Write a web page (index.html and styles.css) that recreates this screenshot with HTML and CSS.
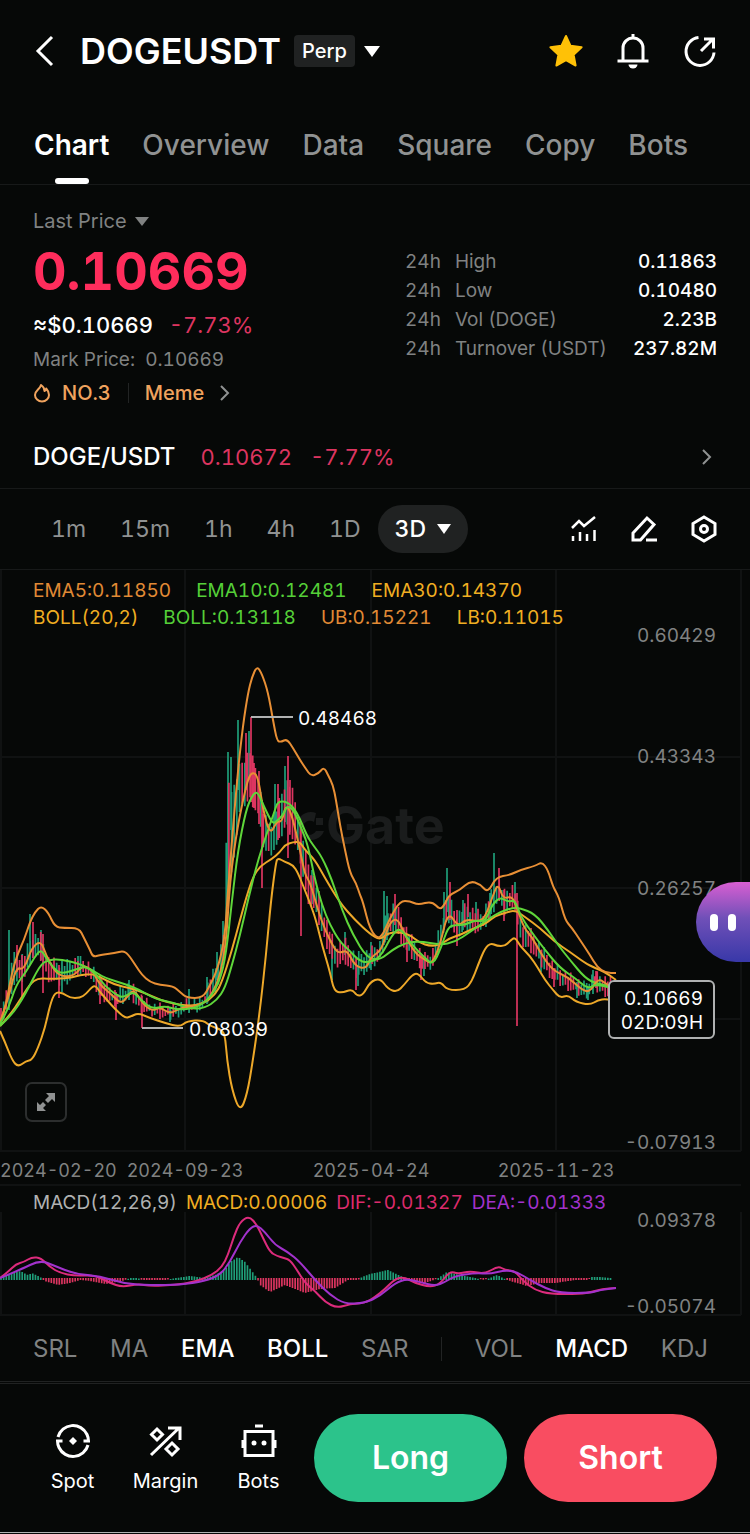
FILE: index.html
```html
<!DOCTYPE html>
<html lang="en">
<head>
    <meta charset="UTF-8">
    <meta name="viewport" content="width=device-width, initial-scale=1.0">
    <title>DOGEUSDT Perp</title>
    <link rel="stylesheet" href="styles.css">
</head>
<body>
    <header class="header">
        <button class="icon-btn back" aria-label="Back">
            <svg width="22" height="32" viewBox="0 0 22 32"><path d="M18 2 4 16l14 14" fill="none" stroke="currentColor" stroke-width="3"/></svg>
        </button>
        <h1 class="symbol">DOGEUSDT</h1>
        <button class="contract">
            <span class="badge">Perp</span>
            <svg width="16" height="11" viewBox="0 0 16 11"><path d="M0 0h16L8 11z" fill="currentColor"/></svg>
        </button>
        <div class="header-actions">
            <button class="icon-btn star" aria-label="Favourite">
                <svg width="36" height="36" viewBox="0 0 36 36"><path d="M18 3l4.600 9.800 11 1.500-8 7.500 2 10.700L18 27.200l-9.600 5.300 2-10.700-8-7.500 11-1.500z" fill="currentColor" stroke="currentColor" stroke-width="2" stroke-linejoin="round"/></svg>
            </button>
            <button class="icon-btn" aria-label="Alerts">
                <svg width="36" height="36" viewBox="0 0 36 36" fill="none" stroke="currentColor" stroke-width="3"><path d="M18 1v4M8 27V15a10 10 0 0 1 20 0v12M2.500 28h31"/><path d="M13.500 31.500h9a4.500 4 0 0 1-9 0z" fill="currentColor" stroke="none"/></svg>
            </button>
            <button class="icon-btn" aria-label="Share">
                <svg width="36" height="36" viewBox="0 0 36 36" fill="none" stroke="currentColor" stroke-width="3"><path d="M16.500 4.500A14 14 0 1 0 32 19.500M19 18 30.500 6.500M22 6h9.500v9.500"/></svg>
            </button>
        </div>
    </header>

    <nav class="tabs">
        <a class="tab active" href="#chart">Chart</a>
        <a class="tab" href="#overview">Overview</a>
        <a class="tab" href="#data">Data</a>
        <a class="tab" href="#square">Square</a>
        <a class="tab" href="#copy">Copy</a>
        <a class="tab" href="#bots">Bots</a>
    </nav>

    <section class="summary">
        <div class="price-row">
            <div class="price-info">
                <button class="price-type">Last Price
                    <svg width="14" height="9" viewBox="0 0 14 9"><path d="M0 0h14L7 9z" fill="currentColor"/></svg>
                </button>
                <div class="price">0.10669</div>
                <div class="fiat">≈$0.10669 <span class="change">-7.73%</span></div>
                <div class="mark">Mark Price: <span>0.10669</span></div>
                <a class="tags" href="#meme">
                    <svg width="18" height="20" viewBox="0 0 18 20"><path d="M8 2c3 2 3.500 4 3.500 6 1-.5 1.500-1.500 1.700-2.500C15 7.500 16 9.500 16 12a7 6.500 0 0 1-14 0c0-2.500 1.500-4 3-5.500C6.500 5 7.500 4 8 2z" fill="none" stroke="currentColor" stroke-width="2" stroke-linejoin="round"/></svg>
                    <span class="rank">NO.3</span>
                    <span class="category">Meme</span>
                    <svg class="arrow" width="10" height="16" viewBox="0 0 10 16"><path d="M1 1l7 7-7 7" fill="none" stroke="currentColor" stroke-width="2"/></svg>
                </a>
            </div>
            <table class="stats">
                <tr><th scope="row"><span>24h</span>High</th><td>0.11863</td></tr>
                <tr><th scope="row"><span>24h</span>Low</th><td>0.10480</td></tr>
                <tr><th scope="row"><span>24h</span>Vol (DOGE)</th><td>2.23B</td></tr>
                <tr><th scope="row"><span>24h</span>Turnover (USDT)</th><td>237.82M</td></tr>
            </table>
        </div>
        <a class="spot-pair" href="#spot">
            <span class="pair">DOGE/USDT</span>
            <span>0.10672</span>
            <span>-7.77%</span>
            <svg class="arrow" width="10" height="16" viewBox="0 0 10 16"><path d="M1 1l7 7-7 7" fill="none" stroke="currentColor" stroke-width="2"/></svg>
        </a>
    </section>

    <div class="toolbar">
        <button class="interval">1m</button>
        <button class="interval">15m</button>
        <button class="interval">1h</button>
        <button class="interval">4h</button>
        <button class="interval">1D</button>
        <button class="interval selected">3D
            <svg width="14" height="10" viewBox="0 0 14 10"><path d="M0 0h14L7 10z" fill="currentColor"/></svg>
        </button>
        <div class="tools">
            <button class="icon-btn" aria-label="Indicators">
                <svg width="28" height="28" viewBox="0 0 28 28" fill="none" stroke="currentColor" stroke-width="2.500"><path d="M2 13l7-7 5 5L25 2M3 21v5M10 17v9M17 19v7M24.500 15v11"/></svg>
            </button>
            <button class="icon-btn" aria-label="Draw">
                <svg width="28" height="28" viewBox="0 0 28 28" fill="none" stroke="currentColor" stroke-width="3"><path d="M3 25v-7L17 3l7 6.500L10.500 25zM16 25h11"/></svg>
            </button>
            <button class="icon-btn" aria-label="Settings">
                <svg width="28" height="28" viewBox="0 0 28 28" fill="none" stroke="currentColor" stroke-width="3"><path d="M14 2l11 6.500v11L14 26 3 19.500v-11z"/><circle cx="14" cy="14" r="3.500"/></svg>
            </button>
        </div>
    </div>

    <section class="chart">
        <svg id="price-chart" class="plot" viewBox="0 570 750 616">
            <path class="grid" d="M0 757h741M0 888h741M0 1019h741M0 1151h741M0 1185h741M1 570v581M185 570v581M371 570v581M556 570v581M741 570v581"/>
            <g class="watermark">
                <path d="M316 813a14 14 0 1 0 8 18h-8a7 7 0 1 1-2-9zM316 818h7v7h-7z"/>
                <text x="326" y="844">Gate</text>
            </g>
            <g id="candles"></g>
            <g id="overlays"></g>
            <path class="pointer" d="M251 717h42M142 1028h41"/>
            <g class="marker">
                <text x="298" y="725">0.48468</text>
                <text x="189" y="1036">0.08039</text>
            </g>
            <g class="axis">
                <text x="716" y="642" class="end">0.60429</text>
                <text x="716" y="763" class="end">0.43343</text>
                <text x="716" y="895" class="end">0.26257</text>
                <text x="716" y="1149" class="end">-0.07913</text>
            </g>
            <g class="axis dates">
                <text x="0" y="1177">2024-02-20</text>
                <text x="185" y="1177" class="middle">2024-09-23</text>
                <text x="371" y="1177" class="middle">2025-04-24</text>
                <text x="556" y="1177" class="middle">2025-11-23</text>
            </g>
            <rect class="tag" x="609" y="981" width="105" height="57" rx="5"/>
            <g class="marker">
                <text x="703" y="1005" class="end">0.10669</text>
                <text x="703" y="1029" class="end">02D:09H</text>
            </g>
        </svg>
        <div class="legend">
            <div><span class="orange">EMA5:0.11850</span><span class="green">EMA10:0.12481</span><span class="yellow">EMA30:0.14370</span></div>
            <div><span class="yellow">BOLL(20,2)</span><span class="green">BOLL:0.13118</span><span class="orange">UB:0.15221</span><span class="yellow">LB:0.11015</span></div>
        </div>
        <button class="expand" aria-label="Full screen">
            <svg width="20" height="20" viewBox="0 0 20 20" fill="currentColor"><path d="M10 1h9v9l-3-3-4 4-3-3 4-4zM1 10l3 3 3-3 3 3-3 3 3 3H1z"/></svg>
        </button>
        <button class="assistant" aria-label="Assistant"><span></span><span></span></button>
    </section>

    <section class="macd">
        <svg id="macd-chart" class="plot" viewBox="0 1186 750 130">
            <path class="grid" d="M1 1212v103M185 1212v103M371 1212v103M556 1212v103M741 1212v103M0 1315h741"/>
            <g id="histogram"></g>
            <g id="macd-lines"></g>
            <g class="axis">
                <text x="716" y="1227" class="end">0.09378</text>
                <text x="716" y="1313" class="end">-0.05074</text>
            </g>
        </svg>
        <div class="macd-legend">
            <span>MACD(12,26,9)</span><span class="yellow">MACD:0.00006</span><span class="pink">DIF:-0.01327</span><span class="purple">DEA:-0.01333</span>
        </div>
    </section>

    <div class="indicators">
        <button>SRL</button>
        <button>MA</button>
        <button class="on">EMA</button>
        <button class="on">BOLL</button>
        <button>SAR</button>
        <i class="divider"></i>
        <button>VOL</button>
        <button class="on">MACD</button>
        <button>KDJ</button>
    </div>

    <footer class="trade-bar">
        <a class="shortcut" href="#spot">
            <svg width="36" height="36" viewBox="0 0 36 36" fill="none" stroke="currentColor" stroke-width="3"><path d="M3 14a15.500 15.500 0 0 1 29-2.500A15.500 15.500 0 0 1 33.500 18h-5M33 22a15.500 15.500 0 0 1-29 2.500A15.500 15.500 0 0 1 2.500 18h5"/><path d="M18 14l4 4-4 4-4-4z" fill="currentColor" stroke="none"/></svg>
            Spot
        </a>
        <a class="shortcut" href="#margin">
            <svg width="36" height="36" viewBox="0 0 36 36" fill="none" stroke="currentColor" stroke-width="3"><path d="M3 32 31 5M20 5h12v12M9 6l5.500 5.500L9 17l-5.500-5.500zM24 20l6 6-6 6-6-6z"/></svg>
            Margin
        </a>
        <a class="shortcut" href="#bots">
            <svg width="36" height="36" viewBox="0 0 36 36" fill="none" stroke="currentColor" stroke-width="3"><path d="M4 8.500h28v24H4zM14 3h8M2 17v8M34 17v8"/><circle cx="13" cy="20" r="2.500" fill="currentColor" stroke="none"/><circle cx="23" cy="20" r="2.500" fill="currentColor" stroke="none"/></svg>
            Bots
        </a>
        <button class="trade long">Long</button>
        <button class="trade short">Short</button>
    </footer>

    <script src="chart.js"></script>
</body>
</html>
```
FILE: styles.css
```css
body {
    margin: 0;
    background-color: #060807;
    color: #fff;
    font-family: Inter, "Liberation Sans", sans-serif;
    font-size: 20px;
    line-height: 24px;
    font-variant-numeric: tabular-nums;
}
button {
    margin: 0;
    padding: 0;
    border: 0;
    background: none;
    color: inherit;
    font: inherit;
    font-variant-numeric: inherit;
    cursor: pointer;
}
a {
    color: inherit;
    text-decoration: none;
}
svg {
    display: block;
    flex-shrink: 0;
}

/* header */
.header {
    display: flex;
    align-items: center;
    height: 102px;
    padding: 0 32px 0 34px;
}
.symbol {
    margin: 0 13px 0 24px;
    font-size: 36px;
    font-weight: 600;
    line-height: 40px;
}
.contract {
    display: flex;
    align-items: center;
    gap: 9px;
}
.badge {
    padding: 4px 8px;
    border-radius: 4px;
    background-color: #202222;
    font-weight: 500;
}
.header-actions {
    display: flex;
    gap: 31px;
    margin-left: auto;
}
.star {
    color: #ffc107;
}

/* tabs */
.tabs {
    display: flex;
    gap: 33px;
    height: 82px;
    padding: 0 34px;
    border-bottom: 1px solid #171919;
}
.tab {
    position: relative;
    color: #909292;
    font-size: 28px;
    font-weight: 500;
    line-height: 86px;
}
.tab.active {
    color: #fff;
    font-weight: 600;
}
.tab.active::after {
    content: "";
    position: absolute;
    left: 50%;
    bottom: 0;
    width: 34px;
    height: 6px;
    margin-left: -17px;
    border-radius: 3px;
    background-color: #fff;
}

/* price summary */
.summary {
    padding: 24px 33px 0;
    border-bottom: 1px solid #171919;
}
.price-row {
    display: flex;
    justify-content: space-between;
}
.price-type {
    display: flex;
    align-items: center;
    gap: 8px;
    color: #808282;
}
.price {
    color: #ff2d5c;
    font-size: 52px;
    font-weight: 700;
    line-height: 78px;
}
.fiat {
    font-size: 22px;
    font-weight: 500;
    line-height: 28px;
}
.change {
    margin-left: 10px;
    color: #dc3560;
    font-weight: 400;
}
.mark {
    color: #808282;
    font-size: 19px;
    line-height: 42px;
}
.mark span {
    margin-left: 5px;
}
.tags {
    display: flex;
    align-items: center;
    color: #f0a35e;
    font-weight: 500;
}
.rank {
    margin-left: 11px;
    padding-right: 17px;
    border-right: 1px solid #222424;
    line-height: 20px;
}
.category {
    margin: 0 16px;
}
.arrow {
    color: #909292;
}
.stats {
    width: 312px;
    margin-top: 38px;
    border-collapse: collapse;
    align-self: flex-start;
}
.stats th, .stats td {
    padding: 0;
    font-size: 19px;
    line-height: 29px;
    white-space: nowrap;
}
.stats th {
    color: #808282;
    font-weight: 400;
    text-align: left;
}
.stats th span {
    margin-right: 14px;
}
.stats td {
    font-weight: 500;
    text-align: right;
}
.spot-pair {
    display: flex;
    align-items: center;
    gap: 18px;
    height: 62px;
    margin-top: 21px;
    color: #dc3560;
    font-size: 22px;
}
.spot-pair .pair {
    margin-right: 7px;
    color: #fff;
    font-size: 24px;
    font-weight: 500;
}
.spot-pair .arrow {
    margin-left: auto;
    margin-right: 5px;
}

/* interval toolbar */
.toolbar {
    display: flex;
    align-items: center;
    height: 80px;
    padding: 0 32px 0 34px;
    border-bottom: 1px solid #171919;
}
.interval {
    padding: 0 17px;
    color: #909292;
    font-size: 23px;
}
.interval.selected {
    display: flex;
    align-items: center;
    gap: 11px;
    height: 48px;
    border-radius: 24px;
    background-color: #202222;
    color: #fff;
    font-weight: 500;
}
.tools {
    display: flex;
    gap: 32px;
    margin-left: auto;
}

/* charts */
.chart, .macd {
    position: relative;
}
.plot {
    width: 100%;
    height: auto;
    overflow: visible;
    font-size: 19px;
}
.grid {
    fill: none;
    stroke: #101212;
    stroke-width: 2;
}
.watermark {
    fill: #1a1c1c;
    font-size: 52px;
    font-weight: 700;
}
.axis {
    fill: #808282;
}
.dates {
    font-size: 18px;
}
.marker {
    fill: #fff;
}
.end {
    text-anchor: end;
}
.middle {
    text-anchor: middle;
}
.pointer {
    fill: none;
    stroke: #b0b2b2;
    stroke-width: 2;
}
.tag {
    fill: #060807;
    stroke: #b0b2b2;
    stroke-width: 2;
}
.line {
    fill: none;
    stroke-width: 2;
    stroke-linejoin: round;
}
.stroke-orange { stroke: #e88f35; }
.stroke-yellow { stroke: #eda829; }
.stroke-green { stroke: #5fd63a; }
.stroke-pink { stroke: #dc2b7c; }
.stroke-purple { stroke: #a232cc; }
.up { stroke: #1f9d78; }
.down { stroke: #dc3560; }
.candle {
    fill: none;
    stroke-width: 1.7;
}
.legend, .macd-legend {
    position: absolute;
    left: 33px;
    font-size: 19px;
    white-space: nowrap;
}
.legend {
    top: 7px;
    line-height: 27px;
}
.legend div {
    display: flex;
    gap: 25px;
}
.macd-legend {
    display: flex;
    gap: 9px;
    top: 5px;
    color: #b0b2b2;
}
.orange { color: #e08a35; }
.yellow { color: #f0ae22; }
.green { color: #55cf38; }
.pink { color: #dc2b6c; }
.purple { color: #a232cc; }
.expand {
    position: absolute;
    left: 25px;
    bottom: 64px;
    display: flex;
    align-items: center;
    justify-content: center;
    width: 42px;
    height: 40px;
    border: 2px solid #2c2e2e;
    border-radius: 7px;
    color: #909292;
}
.assistant {
    position: absolute;
    right: 0;
    top: 312px;
    display: flex;
    align-items: center;
    justify-content: center;
    gap: 10px;
    width: 54px;
    height: 80px;
    border-radius: 40px 0 0 40px;
    background: linear-gradient(#d95fd2, #7050b8 45%, #3838a8);
}
.assistant span {
    width: 8px;
    height: 17px;
    border-radius: 4px;
    background-color: #fff;
}

/* indicator switches */
.indicators {
    display: flex;
    align-items: center;
    justify-content: space-between;
    height: 65px;
    padding: 0 42px 0 33px;
    border-bottom: 3px double #202222;
    color: #808282;
    font-size: 24px;
}
.on {
    color: #fff;
    font-weight: 500;
}
.divider {
    width: 1px;
    height: 24px;
    background-color: #222424;
}

/* bottom bar */
.trade-bar {
    display: flex;
    align-items: center;
    height: 148px;
    padding: 0 33px 0 26px;
    border-bottom: 1px solid #b0b2b2;
}
.shortcut {
    display: flex;
    flex-direction: column;
    align-items: center;
    gap: 10px;
    width: 93px;
}
.trade {
    flex: 1;
    height: 88px;
    border-radius: 44px;
    font-size: 32px;
    font-weight: 600;
}
.long {
    margin: 0 17px 0 9px;
    background-color: #2cc38b;
}
.short {
    background-color: #f94d61;
}
```
FILE: chart.js
```js
const SVG_NS = 'http://www.w3.org/2000/svg';
const STEP = 2.65;
const LAST_X = 612;
const ZERO_Y = 1279;

// curves, as x,y pairs
const overlays = [
    ['yellow', '0,1026 10,1015 20,1000 30,984 38,978 50,979 70,978 80,975 92,974 100,977 115,985 130,988 145,993 160,1000 175,1004 190,1006 203,1004 215,995 222,982 232,950 240,920 247,895 253,877 260,866 272,859 280,852 285,845 293,842 300,842 305,850 315,860 325,878 340,903 355,920 370,934 380,940 388,933 400,932 410,935 420,943 430,946 440,945 450,938 460,935 470,930 480,926 488,922 495,916 505,913 515,910 525,917 540,928 555,942 570,952 585,963 595,968 605,972 616,980'],
    ['yellow', '0,1031 5,1042 12,1060 18,1067 26,1061 32,1060 38,1048 45,1028 50,1005 55,992 63,993 70,998 80,998 86,994 90,989 95,985 100,992 107,1000 115,1009 125,1018 130,1017 138,1013 150,1018 165,1023 180,1027 187,1021 203,1020 210,1026 220,1029 225,1034 227,1060 232,1090 240,1112 247,1095 253,1060 260,1010 266,955 271,900 276,862 278,858 285,862 293,865 298,873 304,888 310,903 316,920 322,945 330,972 334,991 342,993 352,989 357,996 363,995 370,982 380,978 388,989 397,992 404,985 412,975 418,973 426,983 434,984 441,982 447,990 465,990 472,981 478,965 485,948 491,943 497,946 505,946 510,941 515,937 520,946 530,956 538,968 545,980 553,990 560,998 568,995 576,1002 590,1005 598,1000 606,999 616,1001'],
    ['green', '0,1026 12,1015 25,995 40,965 48,960 60,959 80,964 92,970 105,978 125,984 140,990 155,999 175,1003 190,1009 205,1008 217,1000 225,988 232,965 240,935 248,900 258,860 268,830 275,810 278,801 288,802 297,812 307,836 313,845 322,857 332,880 342,910 353,935 367,958 380,960 392,950 405,943 420,941 440,945 455,942 470,932 490,918 500,912 512,908 520,908 535,914 548,930 558,945 570,960 585,978 597,984 616,987'],
    ['orange', '0,1023 5,1010 12,972 18,953 24,940 30,922 35,912 41,906 48,912 55,927 64,928 79,928 84,938 90,950 93,957 100,955 115,953 123,951 128,954 136,966 142,975 150,982 160,985 173,986 180,992 187,998 203,998 210,985 215,975 220,960 225,935 228,890 232,840 238,770 243,725 248,693 252,677 257,666 262,674 268,692 273,720 277,741 281,742 287,739 293,748 300,760 306,769 311,776 318,774 324,767 328,775 333,785 336,800 340,825 345,850 350,873 356,883 360,895 363,902 370,930 380,941 390,918 400,901 410,901 418,905 432,901 440,910 445,904 449,895 460,890 470,881 480,884 488,893 496,877 510,875 520,870 535,866 542,862 548,870 553,887 559,897 565,920 572,928 580,940 590,955 597,967 606,973 616,973'],
    ['orange', '0,1022 8,1000 16,967 24,970 32,947 41,941 46,955 55,972 64,977 75,975 83,965 92,970 100,985 110,993 121,1004 127,997 134,989 143,1004 152,1011 160,1007 170,1014 180,1008 205,1004 214,990 220,975 226,945 230,880 237,830 243,800 249,775 255,772 259,782 263,810 270,835 277,821 282,822 286,804 292,815 300,850 305,875 310,882 318,910 325,930 335,950 340,953 347,950 355,966 366,969 371,957 382,950 388,925 397,917 405,935 415,953 425,960 432,964 440,945 448,911 458,927 466,919 480,922 486,915 492,898 498,883 503,899 512,896 517,908 524,928 532,937 540,952 552,970 568,977 582,990 590,992 598,978 608,985 616,990'],
    ['green', '0,1024 8,1010 16,985 26,972 34,958 41,949 46,958 53,967 60,974 75,970 85,966 95,973 105,986 115,994 123,998 133,991 142,1001 152,1009 165,1006 178,1010 195,1008 205,1002 212,995 220,980 226,955 232,900 238,850 246,810 252,796 257,791 262,802 268,815 273,824 278,820 283,815 287,806 293,809 300,825 308,845 315,880 322,905 330,925 340,942 350,951 358,960 367,963 380,958 392,935 400,927 412,945 425,958 433,965 441,948 448,927 455,925 465,925 475,920 485,922 492,905 500,897 508,902 515,900 520,915 530,930 545,950 560,968 575,978 588,989 595,984 616,989']
];

const macdLines = [
    ['pink', '0,1278 8,1272 16,1264 24,1262 32,1257 41,1258 50,1267 60,1273 75,1276 95,1275 110,1283 122,1287 138,1284 150,1286 175,1285 195,1282 212,1275 222,1267 228,1255 234,1236 240,1222 249,1216 257,1225 263,1238 270,1252 277,1256 284,1258 290,1260 297,1270 305,1283 315,1291 325,1302 337,1308 350,1304 365,1303 375,1297 385,1289 395,1279 404,1277 415,1283 430,1287 440,1284 450,1271 458,1274 470,1271 485,1274 498,1266 505,1270 515,1271 523,1281 535,1290 550,1294 580,1294 592,1292 602,1289 616,1288'],
    ['purple', '0,1278 20,1270 40,1260 55,1266 75,1274 100,1276 125,1284 150,1285 180,1285 205,1281 220,1275 230,1262 240,1242 250,1228 257,1225 265,1232 275,1245 288,1252 300,1262 315,1280 330,1295 345,1304 365,1303 380,1296 395,1283 407,1279 420,1282 435,1286 445,1282 455,1276 475,1273 490,1274 505,1270 517,1272 530,1280 545,1288 560,1293 590,1293 600,1290 616,1288']
];

// trading range: x, high, low
const range = [
    [0, 1015, 1028], [5, 995, 1015], [9, 965, 1000], [14, 955, 985], [24, 955, 980], [32, 935, 958],
    [41, 935, 960], [48, 958, 980], [62, 964, 986], [78, 958, 975], [88, 962, 975], [100, 978, 998],
    [116, 992, 1006], [130, 983, 998], [140, 994, 1010], [150, 1004, 1015], [170, 1007, 1019],
    [190, 1000, 1011], [202, 1000, 1010], [210, 977, 998], [217, 965, 990], [224, 930, 960],
    [228, 780, 900], [233, 790, 865], [240, 765, 810], [250, 750, 800], [258, 775, 815], [264, 815, 850],
    [270, 825, 855], [278, 805, 845], [286, 780, 825], [291, 785, 835], [300, 820, 860], [307, 860, 900],
    [315, 880, 912], [325, 915, 942], [335, 945, 968], [345, 940, 962], [356, 955, 977], [370, 950, 970],
    [380, 942, 960], [386, 915, 940], [395, 902, 930], [405, 925, 950], [416, 945, 963], [426, 956, 972],
    [434, 948, 966], [442, 920, 940], [448, 893, 920], [456, 915, 940], [466, 905, 930], [482, 914, 932],
    [490, 895, 920], [498, 878, 900], [504, 892, 915], [514, 885, 905], [521, 920, 945], [532, 932, 952],
    [544, 950, 970], [556, 967, 983], [570, 975, 990], [585, 984, 998], [594, 973, 990], [612, 980, 998]
];

// long wicks that stand out of the range: x, high, low, direction
const wicks = [
    [9, 930, 1010, 'up'], [17, 945, 972, 'down'], [22, 955, 996, 'down'], [30, 914, 960, 'up'], [33, 922, 958, 'down'],
    [41, 930, 960, 'up'], [43, 934, 993, 'down'], [59, 965, 998, 'down'], [62, 961, 992, 'up'], [78, 956, 972, 'up'],
    [100, 975, 1004, 'down'], [116, 992, 1020, 'down'], [129, 980, 1000, 'up'], [142, 996, 1028, 'down'],
    [170, 1008, 1022, 'up'], [189, 989, 1013, 'up'], [207, 977, 1004, 'up'], [217, 952, 980, 'up'], [223, 921, 960, 'up'],
    [228, 752, 900, 'up'], [231, 757, 830, 'up'], [238, 720, 790, 'up'], [246, 733, 790, 'down'], [249, 731, 780, 'up'],
    [251, 717, 802, 'down'], [254, 763, 808, 'down'], [259, 771, 824, 'down'], [262, 800, 888, 'down'], [275, 784, 824, 'up'],
    [278, 784, 840, 'down'], [285, 766, 822, 'up'], [288, 756, 858, 'down'], [290, 780, 832, 'down'], [301, 830, 936, 'down'],
    [312, 870, 904, 'up'], [332, 940, 980, 'up'], [345, 932, 955, 'up'], [356, 960, 990, 'down'], [358, 965, 986, 'up'],
    [371, 942, 970, 'up'], [384, 891, 945, 'up'], [387, 896, 940, 'up'], [395, 894, 925, 'down'], [407, 938, 962, 'down'],
    [421, 955, 980, 'down'], [424, 956, 976, 'up'], [444, 892, 930, 'up'], [447, 868, 912, 'up'], [450, 882, 920, 'down'],
    [457, 910, 946, 'down'], [463, 900, 930, 'up'], [468, 894, 917, 'down'], [476, 902, 920, 'up'], [490, 893, 920, 'up'],
    [494, 853, 902, 'up'], [499, 868, 900, 'down'], [504, 890, 921, 'down'], [515, 882, 905, 'up'], [517, 893, 1026, 'down'],
    [541, 950, 972, 'up'], [554, 968, 987, 'down'], [577, 982, 998, 'up'], [588, 988, 1000, 'up'], [593, 970, 994, 'up'], [596, 971, 988, 'down']
];

// histogram: x, height above the zero line
const histogram = [
    [0, 1], [8, 4], [20, 8], [28, 4], [32, 6], [42, 1], [44, -2], [58, -6], [70, -4], [80, -1], [90, -2],
    [105, -5], [122, -2], [130, 1], [138, 1], [142, -1], [155, -1], [165, -1], [176, 1], [190, 3], [205, 1], [215, 4],
    [225, 9], [230, 17], [238, 22], [245, 17], [257, 1], [260, -6], [270, -13], [285, -6], [305, -14],
    [320, -10], [335, -9], [348, -1], [358, -1], [362, 2], [370, 5], [388, 9], [403, 2], [406, -1], [425, -4],
    [434, -1], [440, 2], [447, 7], [460, 4], [475, 1], [484, -1], [490, 1], [497, 4], [507, -1], [520, -5], [527, -7],
    [540, -4], [555, -4], [575, -1], [588, -1], [592, 2], [600, 2], [612, 1]
];

function addPath(parent, d, className) {
    const path = document.createElementNS(SVG_NS, 'path');
    path.setAttribute('d', d);
    path.setAttribute('class', className);
    document.getElementById(parent).appendChild(path);
}

function valueAt(points, x, column) {
    for (let i = 1; i < points.length; i++) {
        if (x <= points[i][0]) {
            const a = points[i - 1];
            const b = points[i];
            return a[column] + (b[column] - a[column]) * (x - a[0]) / (b[0] - a[0]);
        }
    }
    return points[points.length - 1][column];
}

// round the corners by curving through the middle of each segment
function smooth(text) {
    const p = text.split(' ').map(pair => pair.split(',').map(Number));
    let d = `M${p[0][0]} ${p[0][1]}`;
    for (let i = 1; i < p.length - 1; i++) {
        const mx = (p[i][0] + p[i + 1][0]) / 2;
        const my = (p[i][1] + p[i + 1][1]) / 2;
        d += `Q${p[i][0]} ${p[i][1]} ${mx} ${my}`;
    }
    const last = p[p.length - 1];
    return d + `L${last[0]} ${last[1]}`;
}

function drawCandles() {
    const paths = { up: '', down: '' };
    for (let i = 0; i * STEP <= LAST_X; i++) {
        const x = i * STEP + 1;
        const high = valueAt(range, x, 1) + (i * 7) % 5 * 2 - 3;
        const low = valueAt(range, x, 2) + (i * 5) % 7 - 4;
        const rising = valueAt(range, x + 6, 1) < valueAt(range, x - 6, 1);
        const flip = (i * 11) % 7 < 2;
        paths[rising !== flip ? 'up' : 'down'] += `M${x} ${high}V${low}`;
    }
    wicks.forEach(([x, high, low, side]) => {
        paths[side] += `M${x} ${high}V${low}`;
    });
    addPath('candles', paths.up, 'candle up');
    addPath('candles', paths.down, 'candle down');
}

function drawHistogram() {
    const paths = { up: '', down: '' };
    for (let x = 1; x <= LAST_X; x += STEP) {
        const value = valueAt(histogram, x, 1);
        paths[value >= 0 ? 'up' : 'down'] += `M${x} ${ZERO_Y + (value >= 0 ? 1 : -1)}V${ZERO_Y - value}`;
    }
    addPath('histogram', paths.up, 'candle up');
    addPath('histogram', paths.down, 'candle down');
}

drawCandles();
drawHistogram();
overlays.forEach(([color, points]) => addPath('overlays', smooth(points), `line stroke-${color}`));
macdLines.forEach(([color, points]) => addPath('macd-lines', smooth(points), `line stroke-${color}`));
```
